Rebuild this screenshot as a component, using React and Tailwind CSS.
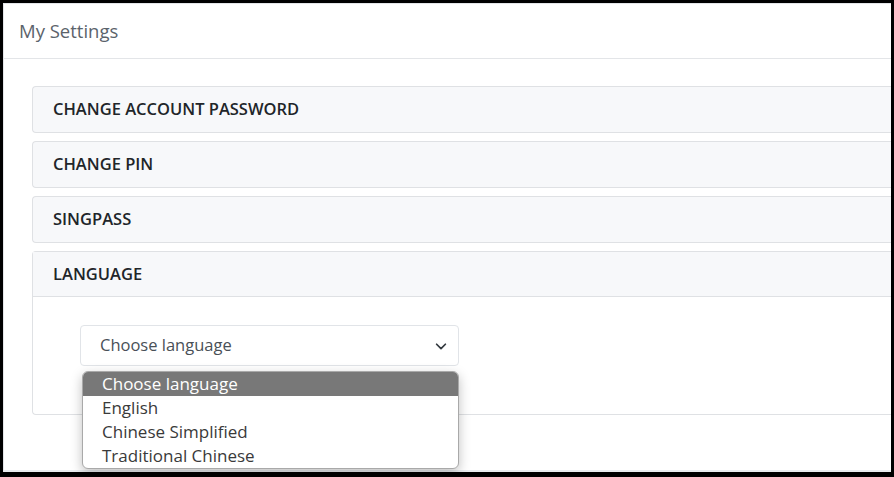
import React from "react";

const font = { fontFamily: '"Open Sans", "Noto Sans", sans-serif' };

function Item({ title }) {
  return (
    <div className="rounded-l-[4px] border border-r-0 border-[#dfe1e4] bg-[#f7f8fa]">
      <div className="flex h-[45px] items-center pl-[20px] text-[16.5px] font-semibold text-[#212529]">
        {title}
      </div>
    </div>
  );
}

export default function App() {
  const options = ["Choose language", "English", "Chinese Simplified", "Traditional Chinese"];
  return (
    <div className="h-[477px] w-[894px] bg-black pl-[3px] pr-[3px] pt-[3px]" style={font}>
      <div className="relative h-[469px] overflow-hidden bg-white">
        <div className="w-[1000px] border-l border-t border-[#e3e5e8]">
          <div className="flex h-[55px] items-center border-b border-[#e3e5e8] pl-[15px] text-[18.5px] text-[#5b636b]">
            My Settings
          </div>
          <div className="flex flex-col gap-[8px] pl-[28px] pt-[27px]">
            <Item title="CHANGE ACCOUNT PASSWORD" />
            <Item title="CHANGE PIN" />
            <Item title="SINGPASS" />
            <div className="rounded-l-[4px] border border-r-0 border-[#dfe1e4]">
              <div className="flex h-[45px] items-center border-b border-[#dfe1e4] bg-[#f7f8fa] pl-[20px] text-[16.5px] font-semibold text-[#212529]">
                LANGUAGE
              </div>
              <div className="pb-[48px] pl-[47px] pt-[28px]">
                <div className="flex h-[41px] w-[379px] items-center justify-between rounded-[4px] border border-[#e1e4e8] bg-white pl-[19px] pr-[10px] text-[16.5px] text-[#495057]">
                  <span>Choose language</span>
                  <svg width="14" height="14" viewBox="0 0 16 16" fill="none">
                    <path d="M3 6l5 5 5-5" stroke="#343a40" strokeWidth="2" strokeLinecap="round" strokeLinejoin="round" />
                  </svg>
                </div>
              </div>
            </div>
          </div>
          <div className="mt-[55px] h-[2px] bg-[#e9ecef]" />
        </div>
        <div className="absolute left-[79px] top-[368px] w-[377px] overflow-hidden rounded-[6px] border border-[#a9a9a9] bg-white shadow-[0_4px_12px_rgba(0,0,0,0.25)]">
          {options.map((o, i) => (
            <div
              key={o}
              className={
                i === 0
                  ? "flex h-[24px] items-center bg-[#787878] pl-[19px] text-[17px] text-white"
                  : "flex h-[24px] items-center pl-[19px] text-[17px] text-[#3a3a3a]"
              }
            >
              {o}
            </div>
          ))}
        </div>
      </div>
    </div>
  );
}
